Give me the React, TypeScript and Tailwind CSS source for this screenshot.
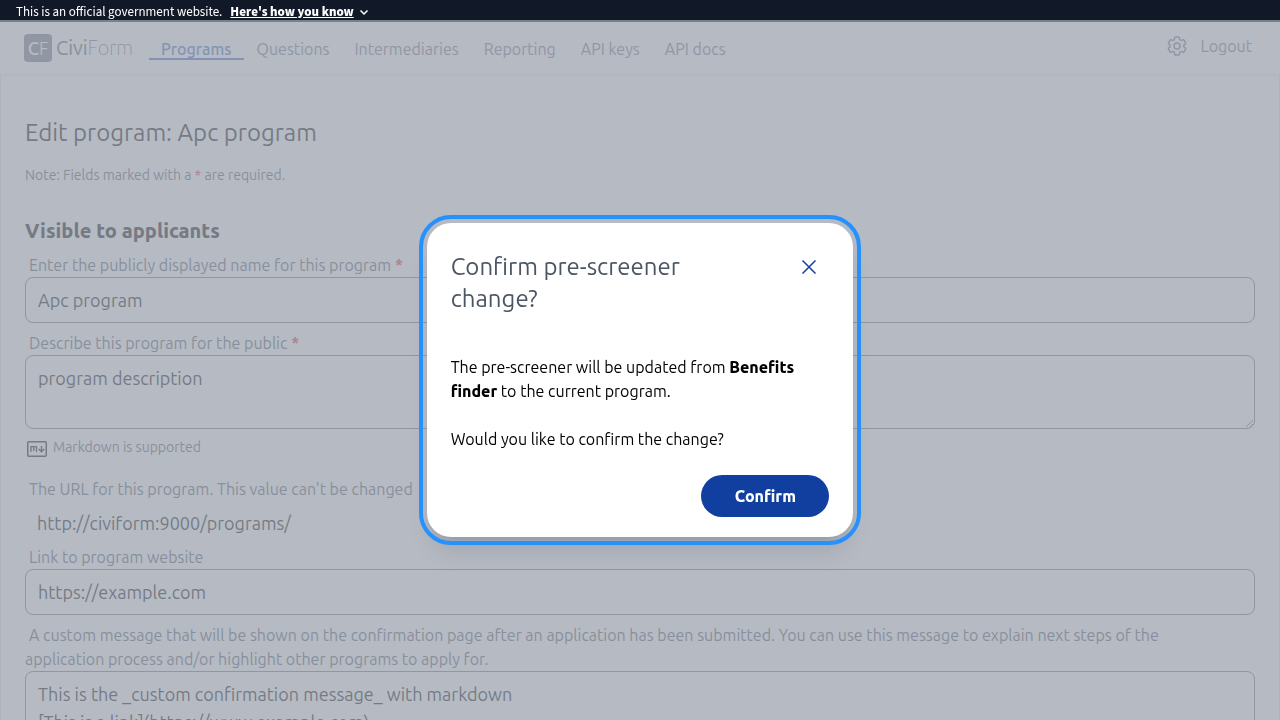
import React, { useId, type ReactNode } from "react";
import { HiOutlineCog6Tooth } from "react-icons/hi2";

const navLinks = ["Questions", "Intermediaries", "Reporting", "API keys", "API docs"];

const controlClass =
  "block w-full rounded-lg border border-[#6b7280] bg-white px-3 py-2 text-lg leading-7 text-black";

function GovBanner() {
  return (
    <header className="flex h-[22px] items-start bg-[#111827] px-4 text-white font-['Source_Sans_3','Noto_Sans_CJK_SC',sans-serif]">
      <div className="relative z-20 flex items-center gap-2 text-[13px] leading-6">
        <p>This is an official government website.</p>
        <button type="button" className="flex items-center gap-1 font-extrabold">
          <span className="underline">Here's how you know</span>
          <svg viewBox="0 0 12 12" className="h-3 w-3" fill="none" stroke="currentColor" strokeWidth="1.5" aria-hidden="true">
            <path d="M2.5 4.5 6 8l3.5-3.5" />
          </svg>
        </button>
      </div>
    </header>
  );
}

function Logo() {
  return (
    <a href="#" aria-label="CiviForm" className="flex items-center gap-1 text-[#4b5563]">
      <span className="flex h-7 w-7 items-center justify-center rounded bg-[#6b7280] text-lg text-white">
        <span className="font-medium">C</span>
        <span className="font-extralight">F</span>
      </span>
      <span className="text-xl">
        Civi<span className="font-thin">Form</span>
      </span>
    </a>
  );
}

function NavBar() {
  return (
    <nav className="flex h-[52px] items-center bg-white pl-6 pr-7 text-[#6b7280] shadow-sm">
      <Logo />
      <div className="ml-4 flex items-center gap-px pt-1">
        <a href="#" className="border-b-2 border-[#3b66c0] px-3 leading-[18px] font-medium text-[#3b66c0]">
          Programs
        </a>
        {navLinks.map((name) => (
          <a key={name} href="#" className="border-b-2 border-transparent px-3 leading-[18px]">
            {name}
          </a>
        ))}
      </div>
      <div className="ml-auto flex items-center gap-3 pb-1">
        <button type="button" aria-label="Settings">
          <HiOutlineCog6Tooth className="h-6 w-6" />
        </button>
        <a href="#">Logout</a>
      </div>
    </nav>
  );
}

function RequiredMark() {
  return <span className="font-bold text-[#dc2626]"> *</span>;
}

function Field({ label, required, children }: { label: string; required?: boolean; children: (id: string) => ReactNode }) {
  const id = useId();
  return (
    <div>
      <div className="pr-6 leading-6 text-[#4b5563]">
        <label htmlFor={id} className="px-1">
          {label}
          {required && <RequiredMark />}
        </label>
      </div>
      {children(id)}
    </div>
  );
}

function MarkdownNote() {
  return (
    <div className="mb-3 flex items-center gap-1 text-sm text-[#4b5563]">
      <svg viewBox="0 0 24 20" className="h-5 w-6" fill="none" stroke="#000" aria-hidden="true">
        <rect x="2.75" y="4.75" width="18.5" height="14.5" rx="1" strokeWidth="1.5" />
        <path d="M6 15V9.7h5.5V15M8.75 10v4" strokeWidth="1.3" />
        <path d="M16.5 9v5.5M13.75 12l2.75 2.75L19.25 12" strokeWidth="1.4" />
      </svg>
      <p>Markdown is supported</p>
    </div>
  );
}

function ProgramForm() {
  return (
    <form className="flex flex-col gap-2">
      <h2 className="text-xl leading-7 font-extrabold">Visible to applicants</h2>
      <Field label="Enter the publicly displayed name for this program" required>
        {(id) => <input id={id} type="text" defaultValue="Apc program" className={controlClass} />}
      </Field>
      <Field label="Describe this program for the public" required>
        {(id) => <textarea id={id} rows={2} defaultValue="program description" className={controlClass} />}
      </Field>
      <MarkdownNote />
      <div>
        <p className="px-1 leading-6 text-[#4b5563]">The URL for this program. This value can't be changed</p>
        <p className="px-3 pt-2 text-lg leading-7">http://civiform:9000/programs/</p>
      </div>
      <Field label="Link to program website">
        {(id) => <input id={id} type="text" defaultValue="https://example.com" className={controlClass} />}
      </Field>
      <Field label="A custom message that will be shown on the confirmation page after an application has been submitted. You can use this message to explain next steps of the application process and/or highlight other programs to apply for.">
        {(id) => (
          <textarea
            id={id}
            rows={4}
            defaultValue={"This is the _custom confirmation message_ with markdown\n[This is a link](https://www.example.com)"}
            className={controlClass}
          />
        )}
      </Field>
    </form>
  );
}

function ConfirmDialog() {
  return (
    <div className="fixed inset-x-0 top-5 bottom-0 z-10 flex items-center justify-center bg-[#9ca3af]/75">
      <div
        role="dialog"
        aria-modal="true"
        aria-labelledby="dialog-title"
        className="mt-5 w-1/3 rounded-3xl bg-white px-6 pt-7 pb-5 text-black shadow-xl outline-4 outline-offset-4 outline-[#2491ff]"
      >
        <div className="flex items-start justify-between">
          <h2 id="dialog-title" className="max-w-72 text-2xl leading-8 text-[#4b5563]">
            Confirm pre-screener change?
          </h2>
          <button type="button" aria-label="Close" className="flex h-8 w-10 items-center justify-center text-[#113f9f]">
            <svg viewBox="0 0 14 14" className="h-3.5 w-3.5" fill="none" stroke="currentColor" strokeWidth="1.5" aria-hidden="true">
              <path d="M.5.5l13 13M13.5.5l-13 13" />
            </svg>
          </button>
        </div>
        <p className="mt-10 leading-6">
          The pre-screener will be updated from <strong className="font-extrabold">Benefits finder</strong> to the current program.
        </p>
        <p className="mt-6 leading-6">Would you like to confirm the change?</p>
        <div className="mt-6 flex justify-end">
          <button type="button" className="h-[42px] w-32 rounded-full bg-[#113f9f] font-extrabold text-white">
            Confirm
          </button>
        </div>
      </div>
    </div>
  );
}

export default function App() {
  return (
    <div className="min-h-screen bg-white text-black font-[Ubuntu,'Ubuntu_Sans','Noto_Sans',sans-serif]">
      <div className="h-screen overflow-hidden">
        <GovBanner />
        <NavBar />
        <main className="border border-[#e5e7eb] px-6 pt-[42px]">
          <h1 className="text-2xl leading-8">Edit program: Apc program</h1>
          <p className="mt-4 mb-8 text-sm leading-5 text-[#4b5563]">
            Note: Fields marked with a <span className="text-[#dc2626]">*</span> are required.
          </p>
          <ProgramForm />
        </main>
      </div>
      <ConfirmDialog />
    </div>
  );
}
